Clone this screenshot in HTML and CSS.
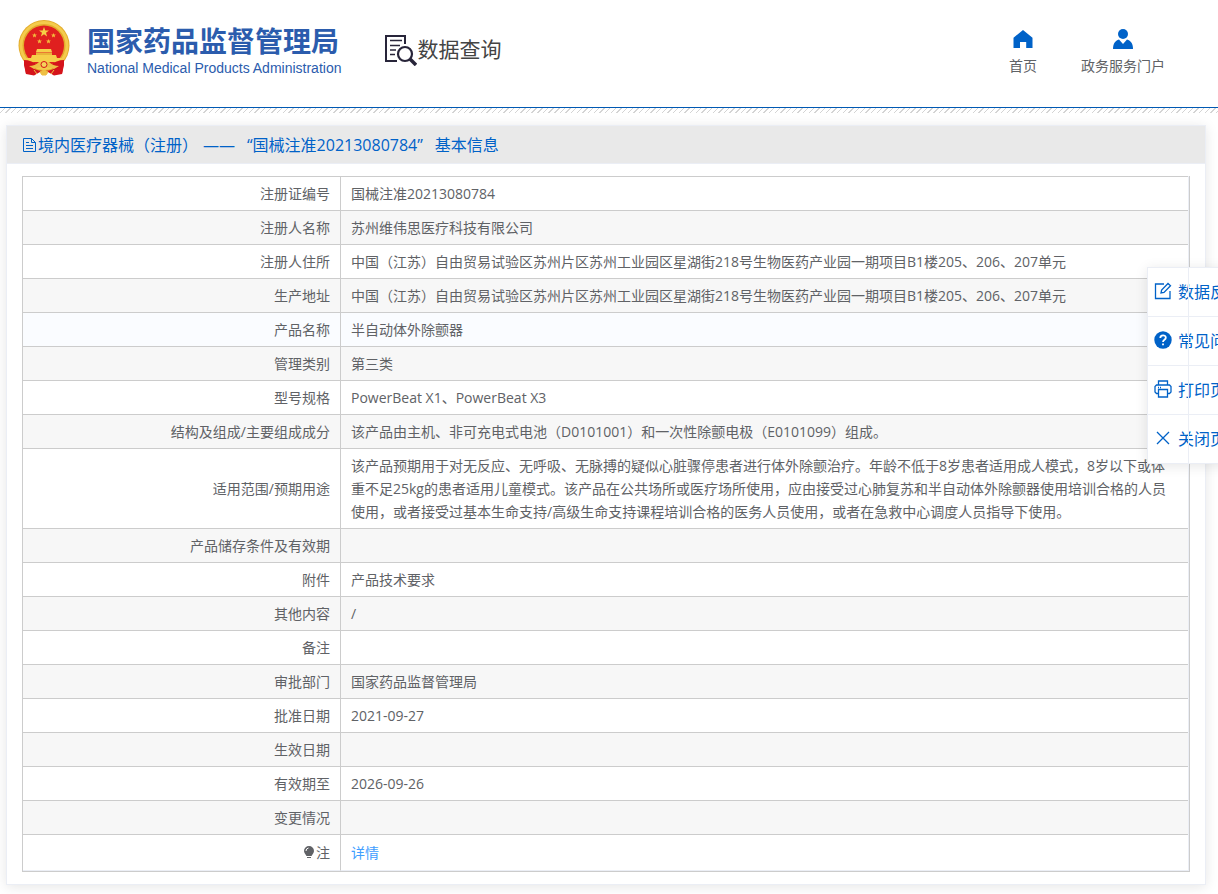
FILE: index.html
```html
<!DOCTYPE html>
<html lang="zh-CN">
<head>
    <meta charset="UTF-8">
    <meta name="viewport" content="width=device-width, initial-scale=1.0">
    <title>国家药品监督管理局数据查询</title>
    <link rel="stylesheet" href="styles.css">
</head>
<body>

    <header class="header">
        <svg class="emblem" viewBox="0 0 52 56" aria-hidden="true">
            <path d="M7 37 L45 37 L46 42 L44 54 L36 55.500 L30 52 L22 52 L16 55.500 L8 54 L6 42Z" fill="#d5141b"/>
            <circle cx="26" cy="25.500" r="25.500" fill="#e3ab2b"/>
            <circle cx="26" cy="25.500" r="23" fill="none" stroke="#f4cb4c" stroke-width="3"/>
            <circle cx="26" cy="25.500" r="20" fill="#e0201f"/>
            <path d="M26 7l1.300 3.500h3.700l-3 2.300 1.100 3.600-3.100-2.200-3.100 2.200 1.100-3.600-3-2.300h3.700z" fill="#f5cf45"/>
            <g fill="#f3b93c">
                <path id="star" d="M16.500 13l.7 1.600h1.700l-1.300 1.100.5 1.700-1.600-1-1.600 1 .5-1.700-1.300-1.100h1.700z"/>
                <use href="#star" x="19"/>
                <use href="#star" x="5" y="6"/>
                <use href="#star" x="14" y="6"/>
            </g>
            <path d="M19 29h14l1 3H18zM18 32.500h16v2.500h4l1 3h5l-2 4H10l-2-4h5l1-3h4z" fill="#f6cf4a"/>
            <path d="M18 34h16" stroke="#dc9a28" stroke-width="1"/>
            <path d="M6 40c5 0 10 2 14 5l-3 4-9 5-2-9zM46 40c-5 0-10 2-14 5l3 4 9 5 2-9z" fill="#d5141b"/>
            <path d="M11 46q6 0 10-4h10q4 4 10 4l-5 3q-5-2-10-2t-10 2z" fill="#eec044"/>
            <circle cx="26" cy="44.500" r="3" fill="#f5d35c" stroke="#d5141b" stroke-width="1"/>
            <path d="M16 50l3 4M36 50l-3 4M22 52l4-2 4 2-2 3h-4z" fill="#eec044" stroke="#eec044"/>
        </svg>
        <div class="brand">
            <div class="brand-name">国家药品监督管理局</div>
            <div class="brand-en">National Medical Products Administration</div>
        </div>
        <div class="search-title">
            <svg class="search-icon" viewBox="0 0 32 32" fill="none" stroke="#28253a" aria-hidden="true">
                <path d="M20 10V2H1v25h11" stroke-width="2"/>
                <path d="M5 6.500h12M5 11.500h10M5 16h6M5 20.500h5" stroke-width="1.500"/>
                <circle cx="20" cy="20" r="7" stroke-width="2.200"/>
                <path d="M25 25l6 6" stroke-width="3.500"/>
            </svg>
            <span>数据查询</span>
        </div>
        <nav class="nav">
            <a href="#" class="nav-item">
                <svg class="nav-icon" viewBox="0 0 20 20" aria-hidden="true"><path d="M10 1l9.500 7.800V19h-6.300v-6H7v6H.500V8.800z" fill="#0062c8"/></svg>
                首页
            </a>
            <a href="#" class="nav-item">
                <svg class="nav-icon" viewBox="0 0 20 20" aria-hidden="true"><circle cx="10" cy="5" r="5" fill="#0062c8"/><path d="M0 20c0-5 2-8.500 6-9.500l4 4.500 4-4.500c4 1 6 4.500 6 9.500z" fill="#0062c8"/></svg>
                政务服务门户
            </a>
        </nav>
    </header>
    <div class="stripes"></div>

    <main class="card">
        <h1 class="card-title">
            <svg class="doc-icon" viewBox="0 0 16 16" fill="none" stroke="#0062c8" aria-hidden="true"><path d="M1.500 1.500h8l4 4v9h-12zM9.500 1.500v4h4M4 5.500h3M4 8.500h7M4 11.500h7"/></svg>
            <span>境内医疗器械（注册）</span>
            <span class="dash">——</span>
            <span class="quoted">“国械注准20213080784”</span>
            <span>基本信息</span>
        </h1>
        <div class="card-body">
            <div class="table-wrap">
                <table class="info">
                    <tbody>
                        <tr><th scope="row">注册证编号</th><td>国械注准20213080784</td></tr>
                        <tr><th scope="row">注册人名称</th><td>苏州维伟思医疗科技有限公司</td></tr>
                        <tr><th scope="row">注册人住所</th><td>中国（江苏）自由贸易试验区苏州片区苏州工业园区星湖街218号生物医药产业园一期项目B1楼205、206、207单元</td></tr>
                        <tr><th scope="row">生产地址</th><td>中国（江苏）自由贸易试验区苏州片区苏州工业园区星湖街218号生物医药产业园一期项目B1楼205、206、207单元</td></tr>
                        <tr class="active"><th scope="row">产品名称</th><td>半自动体外除颤器</td></tr>
                        <tr><th scope="row">管理类别</th><td>第三类</td></tr>
                        <tr><th scope="row">型号规格</th><td>PowerBeat X1、PowerBeat X3</td></tr>
                        <tr><th scope="row">结构及组成/主要组成成分</th><td>该产品由主机、非可充电式电池（D0101001）和一次性除颤电极（E0101099）组成。</td></tr>
                        <tr><th scope="row">适用范围/预期用途</th><td>该产品预期用于对无反应、无呼吸、无脉搏的疑似心脏骤停患者进行体外除颤治疗。年龄不低于8岁患者适用成人模式，8岁以下或体重不足25kg的患者适用儿童模式。该产品在公共场所或医疗场所使用，应由接受过心肺复苏和半自动体外除颤器使用培训合格的人员使用，或者接受过基本生命支持/高级生命支持课程培训合格的医务人员使用，或者在急救中心调度人员指导下使用。</td></tr>
                        <tr><th scope="row">产品储存条件及有效期</th><td></td></tr>
                        <tr><th scope="row">附件</th><td>产品技术要求</td></tr>
                        <tr><th scope="row">其他内容</th><td>/</td></tr>
                        <tr><th scope="row">备注</th><td></td></tr>
                        <tr><th scope="row">审批部门</th><td>国家药品监督管理局</td></tr>
                        <tr><th scope="row">批准日期</th><td>2021-09-27</td></tr>
                        <tr><th scope="row">生效日期</th><td></td></tr>
                        <tr><th scope="row">有效期至</th><td>2026-09-26</td></tr>
                        <tr><th scope="row">变更情况</th><td></td></tr>
                        <tr class="note">
                            <th scope="row"><svg class="bulb" viewBox="0 0 12 14" aria-hidden="true"><path d="M6 1a5 5 0 0 1 5 5c0 2-1.500 3-2.500 5h-5C2.500 9 1 8 1 6a5 5 0 0 1 5-5zM4 12h4v1H4z" fill="#606266"/><path d="M3 6a3 3 0 0 1 2.500-3" fill="none" stroke="#fff"/></svg>注</th>
                            <td><a href="#" class="detail">详情</a></td>
                        </tr>
                    </tbody>
                </table>
            </div>
        </div>
    </main>

    <!-- Side tools -->
    <aside class="tools">
        <button type="button" class="tool">
            <svg class="tool-icon" viewBox="0 0 18 18" fill="none" stroke="#0062c8" stroke-width="1.300" aria-hidden="true"><path d="M10 2H1.500v14.500H16V9M7 11l.6-3L14 1.500l2.500 2.300L10 10.400z"/></svg>
            数据反馈
        </button>
        <button type="button" class="tool">
            <svg class="tool-icon" viewBox="0 0 18 18" fill="none" aria-hidden="true"><circle cx="9" cy="9" r="8.700" fill="#0062c8"/><path d="M6.300 7c0-3.500 5.500-3.500 5.500-.3C11.800 8.800 9 8.700 9 11M9 12.500v1.800" stroke="#fff" stroke-width="1.800"/></svg>
            常见问题
        </button>
        <button type="button" class="tool">
            <svg class="tool-icon" viewBox="0 0 18 18" fill="none" stroke="#0062c8" stroke-width="1.300" aria-hidden="true"><path d="M4.500 5V1h9v4M4.500 13.500h-2L1 12V6.500L2.500 5h13L17 6.500V12l-1.500 1.500h-2M4.500 9.500h9V17h-9zM4 7.500h1M6 7.500h1"/></svg>
            打印页面
        </button>
        <button type="button" class="tool">
            <svg class="tool-icon" viewBox="0 0 18 18" fill="none" stroke="#0062c8" stroke-width="1.300" aria-hidden="true"><path d="M3 3l12 12M15 3L3 15"/></svg>
            关闭页面
        </button>
    </aside>

</body>
</html>
```

FILE: styles.css
```css
* {
    box-sizing: border-box;
}

body {
    margin: 0;
    font-family: "Open Sans", "Noto Sans CJK SC", sans-serif;
    font-size: 14px;
    line-height: 23px;
    color: #606266;
    background-color: #fff;
}

a {
    text-decoration: none;
}

.header {
    display: flex;
    align-items: center;
    height: 108px;
    padding: 0 53px 12px 18px;
    border-bottom: 1px solid #0059b3;
}

.emblem {
    width: 52px;
    height: 56px;
}

.brand {
    margin-left: 17px;
    padding-top: 5px;
    color: #2b5cad;
    white-space: nowrap;
}

.brand-name {
    font-size: 28px;
    font-weight: 700;
    line-height: 36px;
}

.brand-en {
    font-family: "Liberation Sans", Arial, sans-serif;
    font-size: 14px;
    line-height: 18px;
}

.search-title {
    display: flex;
    align-items: center;
    margin-left: 44px;
    padding-top: 4px;
    font-size: 21px;
    color: #444;
    white-space: nowrap;
}

.search-icon {
    width: 32px;
    height: 32px;
}

.nav {
    display: flex;
    gap: 44px;
    margin-left: auto;
    padding-top: 11px;
}

.nav-item {
    display: flex;
    flex-direction: column;
    align-items: center;
    gap: 5px;
    color: #606266;
}

.nav-icon {
    width: 20px;
    height: 20px;
}

.stripes {
    height: 5px;
    background: repeating-linear-gradient(135deg, #fff 0 3px, #d4d4d4 3px 4px);
}

.card {
    margin: 12px 12px 10px 6px;
    border: 1px solid #ebeef5;
    background-color: #fff;
    box-shadow: 0 2px 12px rgba(0, 0, 0, 0.1);
}

.card-title {
    display: flex;
    align-items: center;
    height: 38px;
    margin: 0;
    padding: 1px 15px 0;
    border-bottom: 1px solid #ebeef5;
    font-size: 16px;
    font-weight: 400;
    color: #0062c8;
    background-color: #e9e9e9;
}

.doc-icon {
    width: 16px;
    height: 16px;
}

.dash {
    margin: 0 12px 0 5px;
}

.quoted {
    margin-right: 12px;
}

.card-body {
    padding: 12px 15px;
}

.table-wrap {
    position: relative;
    border-right: 1px solid #ccc;
    border-bottom: 1px solid #ccc;
}

/* Light edge line, drawn above the side tools */
.table-wrap::after {
    content: "";
    position: absolute;
    top: 0;
    right: 0;
    width: 1px;
    height: 100%;
    background-color: #ebeef5;
    z-index: 3;
}

.info {
    width: 100%;
    border-collapse: separate;
    border-spacing: 0;
    border-top: 1px solid #ccc;
    border-left: 1px solid #ccc;
}

.info th,
.info td {
    height: 34px;
    padding: 5px 10px;
    border-bottom: 1px solid #ccc;
    font-weight: 400;
}

.info td {
    padding-right: 20px;
}

.info th {
    width: 318px;
    border-right: 1px solid #ccc;
    text-align: right;
}

.info tr:nth-child(even) {
    background-color: #f7f7f7;
}

.info .active {
    background-color: #fafcff;
}

.info .note th,
.info .note td {
    height: 36px;
    border-bottom-color: #ebeef5;
}

.bulb {
    width: 12px;
    height: 14px;
    margin-right: 1px;
    vertical-align: -1px;
}

.detail {
    color: #409eff;
}

.tools {
    position: fixed;
    top: 267px;
    right: -48px;
    width: 119px;
    border: 1px solid #ebeef5;
    background-color: #fff;
    box-shadow: 0 2px 12px rgba(0, 0, 0, 0.1);
    z-index: 2;
}

.tool {
    display: flex;
    align-items: center;
    gap: 6px;
    width: 100%;
    height: 49px;
    padding: 0 6px 2px;
    border: 0;
    border-bottom: 1px solid #ebeef5;
    font-family: inherit;
    font-size: 16px;
    color: #0062c8;
    background-color: #fff;
    white-space: nowrap;
    cursor: pointer;
}

.tool:last-child {
    height: 48px;
    border-bottom: 0;
}

.tool-icon {
    flex: none;
    width: 18px;
    height: 18px;
}
```
